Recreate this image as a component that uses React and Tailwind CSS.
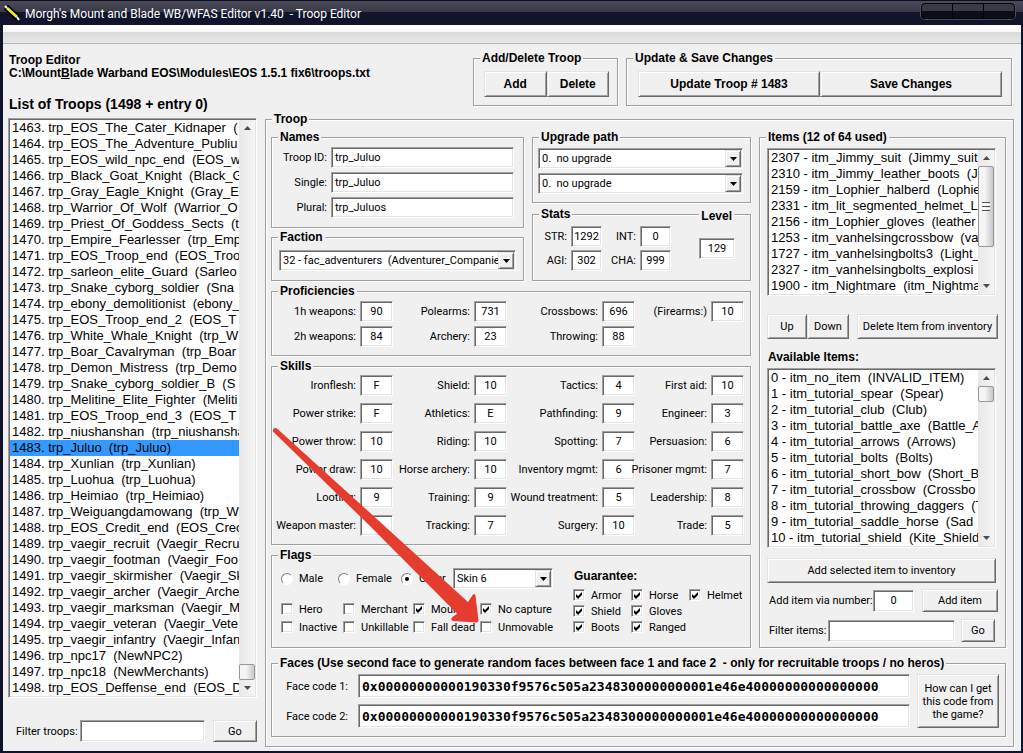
import { useState } from "react";

const TROOPS = [
  "1463. trp_EOS_The_Cater_Kidnaper  (",
  "1464. trp_EOS_The_Adventure_Publiu",
  "1465. trp_EOS_wild_npc_end  (EOS_w",
  "1466. trp_Black_Goat_Knight  (Black_G",
  "1467. trp_Gray_Eagle_Knight  (Gray_E",
  "1468. trp_Warrior_Of_Wolf  (Warrior_O",
  "1469. trp_Priest_Of_Goddess_Sects  (t",
  "1470. trp_Empire_Fearlesser  (trp_Emp",
  "1471. trp_EOS_Troop_end  (EOS_Troo",
  "1472. trp_sarleon_elite_Guard  (Sarleo",
  "1473. trp_Snake_cyborg_soldier  (Sna",
  "1474. trp_ebony_demolitionist  (ebony_",
  "1475. trp_EOS_Troop_end_2  (EOS_T",
  "1476. trp_White_Whale_Knight  (trp_W",
  "1477. trp_Boar_Cavalryman  (trp_Boar",
  "1478. trp_Demon_Mistress  (trp_Demo",
  "1479. trp_Snake_cyborg_soldier_B  (S",
  "1480. trp_Melitine_Elite_Fighter  (Meliti",
  "1481. trp_EOS_Troop_end_3  (EOS_T",
  "1482. trp_niushanshan  (trp_niushansha",
  "1483. trp_Juluo  (trp_Juluo)",
  "1484. trp_Xunlian  (trp_Xunlian)",
  "1485. trp_Luohua  (trp_Luohua)",
  "1486. trp_Heimiao  (trp_Heimiao)",
  "1487. trp_Weiguangdamowang  (trp_W",
  "1488. trp_EOS_Credit_end  (EOS_Crec",
  "1489. trp_vaegir_recruit  (Vaegir_Recru",
  "1490. trp_vaegir_footman  (Vaegir_Foo",
  "1491. trp_vaegir_skirmisher  (Vaegir_Sk",
  "1492. trp_vaegir_archer  (Vaegir_Archer",
  "1493. trp_vaegir_marksman  (Vaegir_M",
  "1494. trp_vaegir_veteran  (Vaegir_Vete",
  "1495. trp_vaegir_infantry  (Vaegir_Infan",
  "1496. trp_npc17  (NewNPC2)",
  "1497. trp_npc18  (NewMerchants)",
  "1498. trp_EOS_Deffense_end  (EOS_D",
];

const ITEMS = [
  "2307 - itm_Jimmy_suit  (Jimmy_suit)",
  "2310 - itm_Jimmy_leather_boots  (J",
  "2159 - itm_Lophier_halberd  (Lophie",
  "2331 - itm_lit_segmented_helmet_L",
  "2156 - itm_Lophier_gloves  (leather",
  "1253 - itm_vanhelsingcrossbow  (va",
  "1727 - itm_vanhelsingbolts3  (Light_",
  "2327 - itm_vanhelsingbolts_explosi",
  "1900 - itm_Nightmare  (itm_Nightma",
];

const AVAILABLE = [
  "0 - itm_no_item  (INVALID_ITEM)",
  "1 - itm_tutorial_spear  (Spear)",
  "2 - itm_tutorial_club  (Club)",
  "3 - itm_tutorial_battle_axe  (Battle_A",
  "4 - itm_tutorial_arrows  (Arrows)",
  "5 - itm_tutorial_bolts  (Bolts)",
  "6 - itm_tutorial_short_bow  (Short_B",
  "7 - itm_tutorial_crossbow  (Crossbo",
  "8 - itm_tutorial_throwing_daggers  (T",
  "9 - itm_tutorial_saddle_horse  (Sad",
  "10 - itm_tutorial_shield  (Kite_Shield",
];

const PROFICIENCIES = [
  ["1h weapons:", "90"],
  ["Polearms:", "731"],
  ["Crossbows:", "696"],
  ["(Firearms:)", "10"],
  ["2h weapons:", "84"],
  ["Archery:", "23"],
  ["Throwing:", "88"],
];

const SKILLS = [
  ["Ironflesh:", "F"],
  ["Shield:", "10"],
  ["Tactics:", "4"],
  ["First aid:", "10"],
  ["Power strike:", "F"],
  ["Athletics:", "E"],
  ["Pathfinding:", "9"],
  ["Engineer:", "3"],
  ["Power throw:", "10"],
  ["Riding:", "10"],
  ["Spotting:", "7"],
  ["Persuasion:", "6"],
  ["Power draw:", "10"],
  ["Horse archery:", "10"],
  ["Inventory mgmt:", "6"],
  ["Prisoner mgmt:", "7"],
  ["Looting:", "9"],
  ["Training:", "9"],
  ["Wound treatment:", "5"],
  ["Leadership:", "8"],
  ["Weapon master:", "7"],
  ["Tracking:", "7"],
  ["Surgery:", "10"],
  ["Trade:", "5"],
];

const FLAGS = [
  ["Hero", false],
  ["Merchant", false],
  ["Mounted", true],
  ["No capture", true],
  ["Inactive", false],
  ["Unkillable", false],
  ["Fall dead", false],
  ["Unmovable", false],
];

const GUARANTEE = ["Armor", "Horse", "Helmet", "Shield", "Gloves", null, "Boots", "Ranged"];

const FACE_CODE = "0x00000000000190330f9576c505a2348300000000001e46e40000000000000000";

// Shared 3D edges
const SUNKEN =
  "border border-t-[#a0a0a0] border-l-[#a0a0a0] border-r-white border-b-white shadow-[inset_1px_1px_0_#696969,inset_-1px_-1px_0_#e3e3e3]";
const RAISED =
  "border border-t-[#e3e3e3] border-l-[#e3e3e3] border-r-[#696969] border-b-[#696969] shadow-[inset_1px_1px_0_#ffffff,inset_-1px_-1px_0_#a0a0a0]";

const BOLD = "font-['Liberation_Sans',Arial,sans-serif] text-[12px] leading-[13px] font-bold";

const Group = ({ title, outer = "", className = "", children }) => (
  <fieldset
    className={`relative min-w-0 border border-[#a0a0a0] shadow-[1px_1px_0_#ffffff,inset_1px_1px_0_#ffffff] ${outer}`}
  >
    <legend className={`relative ml-[6px] bg-[#f0f0f0] px-[2px] whitespace-pre ${BOLD}`}>
      {title}
    </legend>
    <div className={className}>{children}</div>
  </fieldset>
);

const Button = ({ className = "", children }) => (
  <button type="button" className={`bg-[#f0f0f0] text-center ${RAISED} ${className}`}>
    {children}
  </button>
);

const TextBox = ({ value = "", className = "px-[3px]", ...rest }) => {
  const [text, setText] = useState(value);
  return (
    <input
      type="text"
      value={text}
      onChange={(e) => setText(e.target.value)}
      className={`min-w-0 bg-white outline-none ${SUNKEN} ${className}`}
      {...rest}
    />
  );
};

const DropDown = ({ label, value }) => (
  <div className={`grid h-[21px] items-stretch bg-white p-px ${SUNKEN}`}>
    <select
      aria-label={label}
      className="col-start-1 row-start-1 min-w-0 appearance-none overflow-hidden bg-transparent pr-4 pl-[2px] leading-[17px] whitespace-pre outline-none"
    >
      <option>{value}</option>
    </select>
    <span
      className={`pointer-events-none col-start-1 row-start-1 flex w-4 items-center justify-center justify-self-end bg-[#f0f0f0] ${RAISED}`}
    >
      <svg width="7" height="4" viewBox="0 0 7 4">
        <path d="M0 0h7L3.5 4z" fill="#000" />
      </svg>
    </span>
  </div>
);

const NumberField = ({ label, value }) => (
  <label className="flex min-w-0 items-center justify-end gap-1 whitespace-nowrap">
    {label}
    <TextBox value={value} className="h-[21px] w-[33px] shrink-0 text-center" />
  </label>
);

const CheckBox = ({ label, checked = false }) => (
  <label className="flex items-center gap-[6px] whitespace-nowrap">
    <span className="grid">
      <input
        type="checkbox"
        defaultChecked={checked}
        className={`peer col-start-1 row-start-1 h-3 w-3 appearance-none bg-white ${SUNKEN}`}
      />
      <svg
        viewBox="0 0 12 12"
        className="pointer-events-none col-start-1 row-start-1 hidden h-3 w-3 peer-checked:block"
      >
        <path d="M3 5v3l2 2 4-4V3L5 7z" fill="#000" />
      </svg>
    </span>
    {label}
  </label>
);

const Radio = ({ label, checked = false }) => (
  <label className="flex items-center gap-[6px] whitespace-nowrap">
    <span className="grid">
      <input
        type="radio"
        name="gender"
        defaultChecked={checked}
        className="peer col-start-1 row-start-1 h-3 w-3 appearance-none rounded-full border border-t-[#808080] border-r-white border-b-white border-l-[#808080] bg-white"
      />
      <span className="pointer-events-none col-start-1 row-start-1 hidden h-1 w-1 place-self-center rounded-full bg-black peer-checked:block" />
    </span>
    {label}
  </label>
);

const ScrollArrow = ({ up }) => (
  <button
    type="button"
    aria-label={up ? "Scroll up" : "Scroll down"}
    className="flex h-4 w-full shrink-0 items-center justify-center"
  >
    <svg width="7" height="4" viewBox="0 0 7 4">
      <path d={up ? "M3.5 0L7 4H0z" : "M0 0h7L3.5 4z"} fill="#4a4a4a" />
    </svg>
  </button>
);

const ListBox = ({ label, rows, selected, thumb, grip, className = "" }) => (
  <div className={`flex bg-white p-px ${SUNKEN} ${className}`}>
    <ul
      role="listbox"
      aria-label={label}
      className="min-w-0 flex-1 overflow-hidden font-['Liberation_Sans',Arial,sans-serif] text-[13px] leading-4 whitespace-pre"
    >
      {rows.map((row, i) => (
        <li
          key={row}
          role="option"
          aria-selected={i === selected}
          className={`h-4 pl-[2px] ${i === selected ? "bg-[#3399ff]" : ""}`}
        >
          {row}
        </li>
      ))}
    </ul>
    <div className="flex w-4 shrink-0 flex-col bg-linear-to-r from-[#e8e8e8] to-[#f5f5f5]">
      <ScrollArrow up />
      <div className={`flex flex-1 flex-col ${thumb === "end" ? "justify-end" : ""}`}>
        <div
          className={`flex flex-col items-center justify-center gap-px rounded-xs border border-[#979797] bg-linear-to-r from-[#f5f5f5] from-40% to-[#c8c8cc] ${
            grip ? "h-[81px]" : "h-4"
          }`}
        >
          {grip && (
            <>
              <span className="h-px w-2 bg-[#555]" />
              <span className="h-px w-2 bg-white" />
              <span className="h-px w-2 bg-[#555]" />
              <span className="h-px w-2 bg-white" />
              <span className="h-px w-2 bg-[#555]" />
            </>
          )}
        </div>
      </div>
      <ScrollArrow />
    </div>
  </div>
);

const TitleBar = () => (
  <header className="flex h-[25px] items-start border-t border-[#0d0f1e] bg-linear-to-b from-[#4a4a58] from-0% via-[#3a3a47] via-45% to-[#11142a] to-45% pr-2 pl-1">
    <svg width="17" height="17" viewBox="0 0 17 17" className="mt-1">
      <path d="M2 2l12 11" stroke="#000" strokeWidth="6" />
      <path d="M3 3l10 9" stroke="#f2e63c" strokeWidth="3" />
      <path d="M1 1l2 2M13 12l2 3" stroke="#fff" strokeWidth="2" />
    </svg>
    <h1 className="mt-[5px] ml-1 flex-1 text-[12px] leading-4 whitespace-pre text-white">
      {"Morgh's Mount and Blade WB/WFAS Editor v1.40  - Troop Editor"}
    </h1>
    <div className="mt-[2px] flex h-4 w-[94px] divide-x divide-black overflow-hidden rounded-sm border border-black bg-linear-to-b from-[#3a3a47] from-50% to-[#0b0d18] to-50% shadow-[0_0_0_1px_#4a4a5a]">
      <button type="button" aria-label="Minimize" className="flex-1" />
      <button type="button" aria-label="Maximize" className="flex-1" />
      <button type="button" aria-label="Close" className="flex-1" />
    </div>
  </header>
);

const TroopList = () => (
  <aside className="flex min-w-0 flex-col">
    <div className={`mt-[2px] pl-px whitespace-nowrap ${BOLD}`}>
      <p>Troop Editor</p>
      <p>
        C:\Mount<u>B</u>lade Warband EOS\Modules\EOS 1.5.1 fix6\troops.txt
      </p>
    </div>
    <h2 className="mt-4 mb-[6px] pl-px font-['Liberation_Sans',Arial,sans-serif] text-[14px] leading-4 font-bold">
      List of Troops (1498 + entry 0)
    </h2>
    <ListBox label="List of Troops" rows={TROOPS} selected={20} thumb="end" />
    <div className="mt-[22px] flex items-center">
      <label htmlFor="filter-troops" className="mr-[2px] pl-2 whitespace-nowrap">
        Filter troops:
      </label>
      <TextBox id="filter-troops" className="h-[22px] flex-1 px-[3px]" />
      <Button className="ml-2 h-[22px] w-11">Go</Button>
    </div>
  </aside>
);

const Names = () => (
  <Group title="Names" className="pt-[3px] pr-[9px] pb-[9px]">
    <div className="grid grid-cols-[55px_1fr] items-center gap-x-1 gap-y-1 text-right">
      <label htmlFor="troop-id">Troop ID:</label>
      <TextBox id="troop-id" value="trp_Juluo" className="h-[21px] px-[3px]" />
      <label htmlFor="single">Single:</label>
      <TextBox id="single" value="trp_Juluo" className="h-[21px] px-[3px]" />
      <label htmlFor="plural">Plural:</label>
      <TextBox id="plural" value="trp_Juluos" className="h-[21px] px-[3px]" />
    </div>
  </Group>
);

const Stats = () => (
  <Group title="Stats" className="pt-[5px] pb-[9px] pl-1">
    <div className="flex items-center">
      <div className="grid grid-cols-[30px_31px_30px_31px] items-center gap-x-1 gap-y-[3px] text-right">
        <label htmlFor="str">STR:</label>
        <TextBox id="str" value="1292" className="h-[21px] text-center" />
        <label htmlFor="int">INT:</label>
        <TextBox id="int" value="0" className="h-[21px] text-center" />
        <label htmlFor="agi">AGI:</label>
        <TextBox id="agi" value="302" className="h-[21px] text-center" />
        <label htmlFor="cha">CHA:</label>
        <TextBox id="cha" value="999" className="h-[21px] text-center" />
      </div>
      <TextBox aria-label="Level" value="129" className="ml-[28px] h-[21px] w-9 text-center" />
    </div>
    <span className={`absolute -top-[11px] right-4 bg-[#f0f0f0] px-[2px] ${BOLD}`}>Level</span>
  </Group>
);

const Flags = () => (
  <Group title="Flags" className="pt-[6px] pb-[11px] pl-[9px]">
    <div className="flex">
      <div className="w-[292px]">
        <div className="grid h-[21px] grid-cols-[57px_63px_52px_100px] items-center">
          <Radio label="Male" />
          <Radio label="Female" />
          <Radio label="Other" checked />
          <DropDown label="Skin" value="Skin 6" />
        </div>
        <div className="mt-[11px] grid auto-rows-[18px] grid-cols-[62px_70px_67px_1fr] items-center">
          {FLAGS.map(([label, checked]) => (
            <CheckBox key={label} label={label} checked={checked} />
          ))}
        </div>
      </div>
      <div className="flex-1">
        <h3 className={`mt-[2px] mb-1 pl-px ${BOLD}`}>Guarantee:</h3>
        <div className="grid auto-rows-[16px] grid-cols-[58px_58px_1fr] items-center">
          {GUARANTEE.map((label, i) =>
            label ? <CheckBox key={label} label={label} checked /> : <span key={i} />
          )}
        </div>
      </div>
    </div>
  </Group>
);

const Inventory = () => (
  <Group title="Items (12 of 64 used)" className="flex flex-col pt-1 pr-[7px] pl-[7px]">
    <ListBox label="Items" rows={ITEMS} grip className="mr-[2px]" />
    <div className="mt-[18px] flex h-[25px]">
      <Button className="w-10">Up</Button>
      <Button className="w-[42px]">Down</Button>
      <Button className="ml-2 flex-1 whitespace-nowrap">Delete Item from inventory</Button>
    </div>
    <h3 className={`mt-3 mb-1 pl-px ${BOLD}`}>Available Items:</h3>
    <ListBox label="Available Items" rows={AVAILABLE} className="mr-[2px]" />
    <Button className="mt-[10px] mr-[2px] h-[25px]">Add selected item to inventory</Button>
    <div className="mt-[6px] flex items-center">
      <label htmlFor="item-number" className="flex-1 pl-[2px] whitespace-nowrap">
        Add item via number:
      </label>
      <TextBox id="item-number" value="0" className="h-[22px] w-[41px] text-center" />
      <Button className="ml-2 h-[23px] w-[76px]">Add item</Button>
    </div>
    <div className="mt-[7px] mr-[3px] flex items-center">
      <label htmlFor="filter-items" className="mr-[2px] pl-[2px] whitespace-nowrap">
        Filter items:
      </label>
      <TextBox id="filter-items" className="h-[22px] flex-1 px-[3px]" />
      <Button className="ml-[6px] h-[23px] w-[34px]">Go</Button>
    </div>
  </Group>
);

const Faces = () => (
  <Group
    title="Faces (Use second face to generate random faces between face 1 and face 2  - only for recruitable troops / no heros)"
    outer="col-span-2 mt-[5px]"
    className="pt-1 pr-[6px] pb-2"
  >
    <div className="flex gap-[7px]">
      <div className="grid flex-1 grid-cols-[76px_1fr] items-center gap-x-[10px] gap-y-[6px] text-right">
        <label htmlFor="face-1">Face code 1:</label>
        <TextBox
          id="face-1"
          value={FACE_CODE}
          className="h-6 px-[3px] font-['DejaVu_Sans_Mono',monospace] text-[13px] font-bold"
        />
        <label htmlFor="face-2">Face code 2:</label>
        <TextBox
          id="face-2"
          value={FACE_CODE}
          className="h-6 px-[3px] font-['DejaVu_Sans_Mono',monospace] text-[13px] font-bold"
        />
      </div>
      <Button className="w-[82px] leading-[13px]">How can I get this code from the game?</Button>
    </div>
  </Group>
);

const Arrow = () => (
  <svg
    width="212"
    height="204"
    viewBox="0 0 212 204"
    className="pointer-events-none absolute top-[424px] left-[270px]"
  >
    <path
      d="M3 7.500Q2.500 5 4.500 4Q6 3.500 7.500 5L109 97L198 178L203 170.500Q205 169 205.500 172L208.500 196Q208.500 198.500 206 198.500L183 197Q180 196 182 193.500L187 189.500L101 103Z"
      fill="#e63c2f"
    />
  </svg>
);

export default function App() {
  return (
    <div className="relative flex min-h-screen flex-col overflow-hidden border-b-2 border-[#10142b] bg-[#10142b] font-[Roboto,'Liberation_Sans',sans-serif] text-[11px] leading-[13px] text-black">
      <TitleBar />
      <div className="mr-[2px] ml-[3px] flex flex-1 flex-col bg-[#f0f0f0]">
        <div className="border-b border-[#b4b4b4] bg-linear-to-b from-white to-[#ebebeb] pt-[7px]">
          <div className="h-[11px] bg-linear-to-b from-[#d9d9d9] to-[#e8e8e8]" />
        </div>
        <main className="grid flex-1 grid-cols-[249fr_749fr] gap-x-2 pt-2 pr-[7px] pb-1 pl-[5px]">
          <TroopList />
          <div className="flex min-w-0 flex-col">
            <div className="flex justify-end gap-2 pr-[2px]">
              <Group
                title="Add/Delete Troop"
                outer="w-[145px]"
                className="pt-[6px] pr-[8px] pb-2 pl-[10px]"
              >
                <div className={`flex h-[26px] ${BOLD}`}>
                  <Button className="flex-1">Add</Button>
                  <Button className="flex-1">Delete</Button>
                </div>
              </Group>
              <Group
                title="Update & Save Changes"
                outer="w-[386px]"
                className="pt-[6px] pr-[9px] pb-2 pl-[11px]"
              >
                <div className={`flex h-[26px] ${BOLD}`}>
                  <Button className="flex-1">Update Troop # 1483</Button>
                  <Button className="flex-1">Save Changes</Button>
                </div>
              </Group>
            </div>
            <Group title="Troop" outer="mt-[7px]" className="pt-[5px] pr-[7px] pb-[9px] pl-[5px]">
              <div className="grid grid-cols-[480fr_247fr] gap-x-2 gap-y-1">
                <div className="flex min-w-0 flex-col gap-1">
                  <div className="grid grid-cols-[253fr_219fr] gap-x-2">
                    <div className="flex min-w-0 flex-col gap-[3px]">
                      <Names />
                      <Group title="Faction" className="pt-[6px] pr-[7px] pb-[9px] pl-[7px]">
                        <DropDown
                          label="Faction"
                          value="32 - fac_adventurers&nbsp; (Adventurer_Companies)"
                        />
                      </Group>
                    </div>
                    <div className="flex min-w-0 flex-col gap-[5px]">
                      <Group title="Upgrade path" className="pt-1 pr-[7px] pb-2 pl-[5px]">
                        <div className="flex flex-col gap-1">
                          <DropDown label="Upgrade 1" value="0.&nbsp; no upgrade" />
                          <DropDown label="Upgrade 2" value="0.&nbsp; no upgrade" />
                        </div>
                      </Group>
                      <Stats />
                    </div>
                  </div>
                  <Group title="Proficiencies" className="pt-[3px] pr-[6px] pb-2">
                    <div className="grid grid-cols-[121fr_114fr_128fr_109fr] gap-y-1">
                      {PROFICIENCIES.map(([label, value]) => (
                        <NumberField key={label} label={label} value={value} />
                      ))}
                    </div>
                  </Group>
                  <Group title="Skills" className="pt-[2px] pr-[6px] pb-2">
                    <div className="grid grid-cols-[121fr_114fr_128fr_109fr] gap-y-[7px]">
                      {SKILLS.map(([label, value]) => (
                        <NumberField key={label} label={label} value={value} />
                      ))}
                    </div>
                  </Group>
                  <Flags />
                </div>
                <Inventory />
                <Faces />
              </div>
            </Group>
          </div>
        </main>
      </div>
      <Arrow />
    </div>
  );
}
